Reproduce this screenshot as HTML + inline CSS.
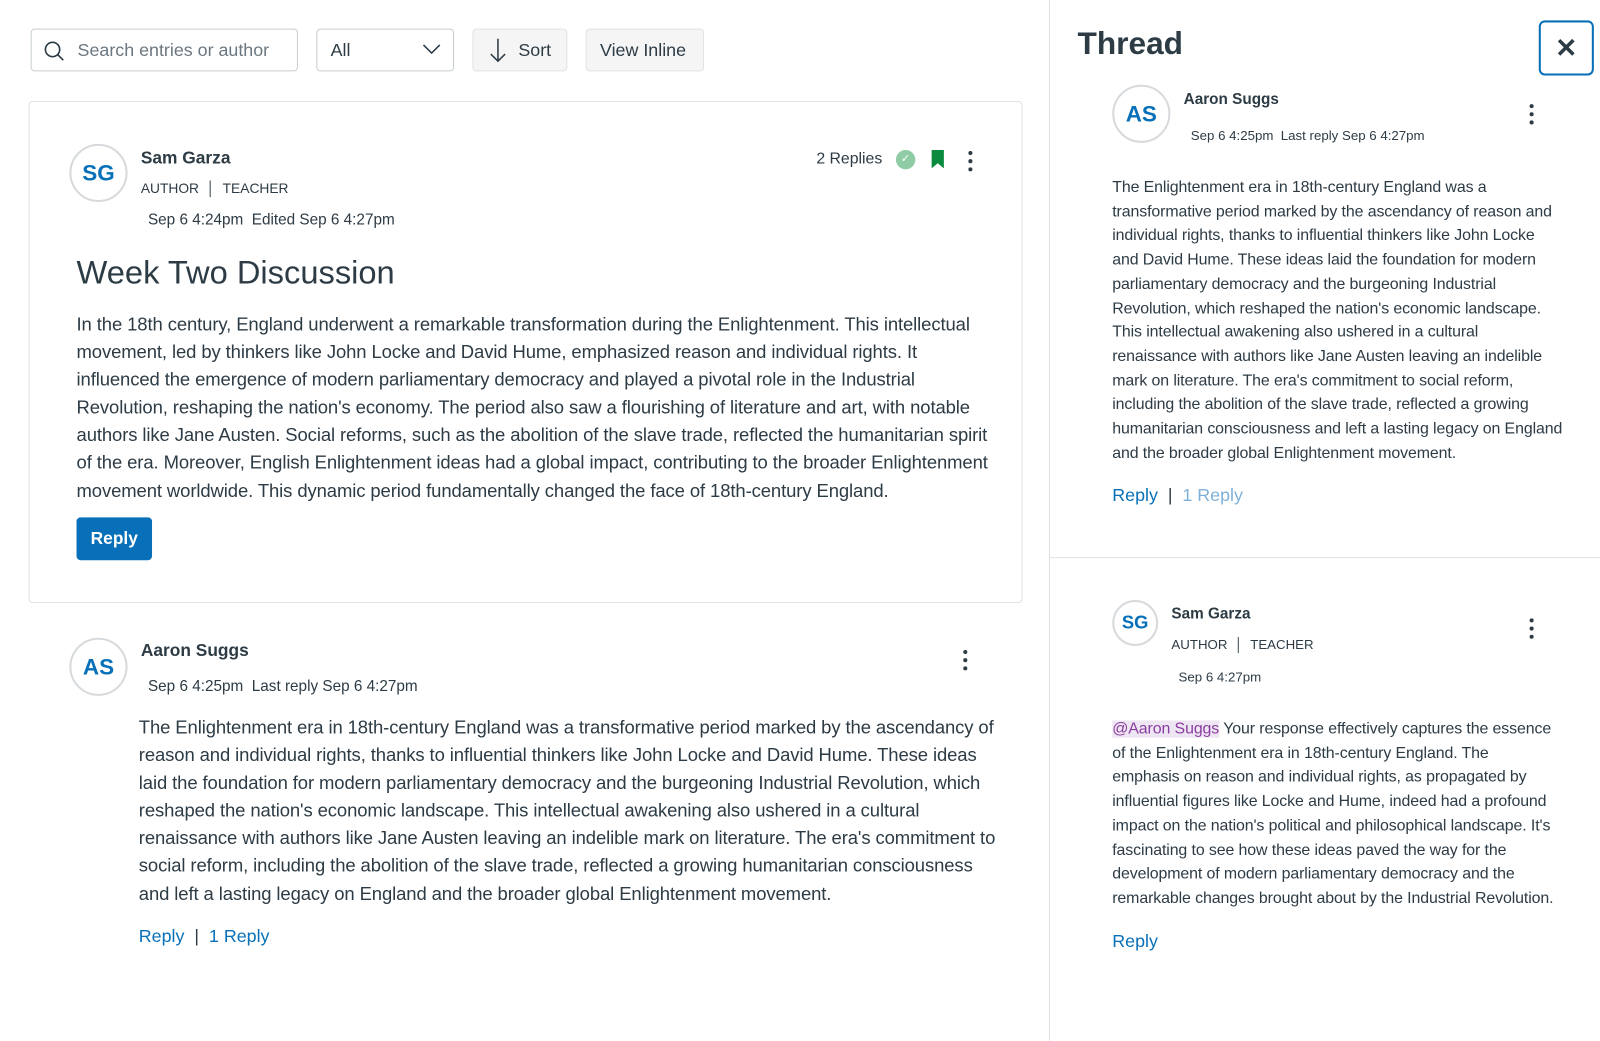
<!DOCTYPE html>
<html><head><meta charset="utf-8"><style>
*{box-sizing:border-box;margin:0;padding:0}
html,body{width:1600px;height:1020px;overflow:hidden;background:#fff}
#w{position:absolute;left:0;top:0;width:1568px;height:1000px;transform:scale(1.0204);transform-origin:0 0;font-family:"Liberation Sans",sans-serif;color:#2d3b45}
.a{position:absolute;white-space:nowrap}
.box{position:absolute;border:1px solid #c7cdd1;border-radius:4px;background:#fff}
.btn{position:absolute;background:#f5f5f5;border:1px solid #dfe2e4;border-radius:4px}
.av{position:absolute;border:2px solid #d7dadd;border-radius:50%;color:#0770b8;font-weight:bold;display:flex;align-items:center;justify-content:center}
.dots{position:absolute;width:4px}
.dots i{display:block;width:4px;height:4px;border-radius:50%;background:#2d3b45;margin-bottom:4px}
.body{position:absolute;white-space:nowrap;letter-spacing:-0.1px}
.link{color:#0770b8}
</style></head><body><div id="w">
<div class="box" style="left:30px;top:28px;width:262px;height:42px"></div>
<svg class="a" style="left:42px;top:39px" width="22" height="22" viewBox="0 0 22 22"><circle cx="9.5" cy="9.5" r="7" fill="none" stroke="#2d3b45" stroke-width="1.6"/><path d="M14.5 14.5L20 20" stroke="#2d3b45" stroke-width="1.6"/></svg>
<div class="a" style="left:76px;top:39px;font-size:17.5px;color:#6b7780">Search entries or author</div>
<div class="box" style="left:310px;top:28px;width:135px;height:42px"></div>
<div class="a" style="left:324px;top:39px;font-size:17.5px">All</div>
<svg class="a" style="left:414px;top:42px" width="18" height="12"><path d="M1 2l8 8 8-8" fill="none" stroke="#2d3b45" stroke-width="1.5"/></svg>
<div class="btn" style="left:463px;top:28px;width:93px;height:42px"></div>
<svg class="a" style="left:479px;top:37px" width="18" height="26"><path d="M9 1v22M2 16l7 7 7-7" fill="none" stroke="#2d3b45" stroke-width="1.5"/></svg>
<div class="a" style="left:508px;top:39px;font-size:17.5px">Sort</div>
<div class="btn" style="left:574px;top:28px;width:116px;height:42px"></div>
<div class="a" style="left:588px;top:39px;font-size:17.5px">View Inline</div>

<div class="box" style="left:28px;top:99px;width:974px;height:492px;border-color:#dfe2e4"></div>
<div class="av" style="left:68px;top:141px;width:57px;height:57px;font-size:22px">SG</div>
<div class="a" style="left:138px;top:145px;font-size:17px;font-weight:bold">Sam Garza</div>
<div class="a" style="left:138px;top:177px;font-size:13.5px">AUTHOR &nbsp;│&nbsp; TEACHER</div>
<div class="a" style="left:145px;top:207px;font-size:15px">Sep 6 4:24pm &nbsp;Edited Sep 6 4:27pm</div>
<div class="a" style="left:800px;top:147px;font-size:15.5px">2 Replies</div>
<div class="a" style="left:878px;top:147px;width:19px;height:19px;border-radius:50%;background:#8fcca6;color:#fff;font-size:11px;text-align:center;line-height:19px">✓</div>
<svg class="a" style="left:912px;top:146px" width="14" height="20"><path d="M1 1h12v18l-6-5-6 5z" fill="#0b8b3f"/></svg>
<div class="dots" style="left:949px;top:148px"><i></i><i></i><i></i></div>
<div class="a" style="left:75px;top:249px;font-size:32px">Week Two Discussion</div>
<div class="body" style="left:75px;top:305px;font-size:18.1px;line-height:27.1px">In the 18th century, England underwent a remarkable transformation during the Enlightenment. This intellectual<br>movement, led by thinkers like John Locke and David Hume, emphasized reason and individual rights. It<br>influenced the emergence of modern parliamentary democracy and played a pivotal role in the Industrial<br>Revolution, reshaping the nation's economy. The period also saw a flourishing of literature and art, with notable<br>authors like Jane Austen. Social reforms, such as the abolition of the slave trade, reflected the humanitarian spirit<br>of the era. Moreover, English Enlightenment ideas had a global impact, contributing to the broader Enlightenment<br>movement worldwide. This dynamic period fundamentally changed the face of 18th-century England.</div>
<div class="a" style="left:75px;top:507px;width:74px;height:42px;background:#0770b8;border-radius:4px;color:#fff;font-size:17px;font-weight:bold;text-align:center;line-height:42px">Reply</div>

<div class="av" style="left:68px;top:625px;width:57px;height:57px;font-size:22px">AS</div>
<div class="a" style="left:138px;top:628px;font-size:17px;font-weight:bold">Aaron Suggs</div>
<div class="a" style="left:145px;top:664px;font-size:15px">Sep 6 4:25pm &nbsp;Last reply Sep 6 4:27pm</div>
<div class="dots" style="left:944px;top:637px"><i></i><i></i><i></i></div>
<div class="body" style="left:136px;top:700px;font-size:18.1px;line-height:27.1px">The Enlightenment era in 18th-century England was a transformative period marked by the ascendancy of<br>reason and individual rights, thanks to influential thinkers like John Locke and David Hume. These ideas<br>laid the foundation for modern parliamentary democracy and the burgeoning Industrial Revolution, which<br>reshaped the nation's economic landscape. This intellectual awakening also ushered in a cultural<br>renaissance with authors like Jane Austen leaving an indelible mark on literature. The era's commitment to<br>social reform, including the abolition of the slave trade, reflected a growing humanitarian consciousness<br>and left a lasting legacy on England and the broader global Enlightenment movement.</div>
<div class="a" style="left:136px;top:907px;font-size:17.5px"><span class="link">Reply</span> &nbsp;|&nbsp; <span class="link">1 Reply</span></div>

<div class="a" style="left:1028px;top:0;width:1px;height:1020px;background:#dfe2e4"></div>
<div class="a" style="left:1056px;top:25px;font-size:31px;font-weight:bold">Thread</div>
<div class="a" style="left:1508px;top:20px;width:54px;height:54px;border:2px solid #0770b8;border-radius:6px;text-align:center;line-height:50px;font-size:26px;font-weight:bold">✕</div>
<div class="av" style="left:1090px;top:83px;width:57px;height:57px;font-size:22px">AS</div>
<div class="a" style="left:1160px;top:89px;font-size:15px;font-weight:bold">Aaron Suggs</div>
<div class="a" style="left:1167px;top:125px;font-size:13px">Sep 6 4:25pm &nbsp;Last reply Sep 6 4:27pm</div>
<div class="dots" style="left:1499px;top:102px"><i></i><i></i><i></i></div>
<div class="body" style="left:1090px;top:172px;font-size:15.6px;line-height:23.7px">The Enlightenment era in 18th-century England was a<br>transformative period marked by the ascendancy of reason and<br>individual rights, thanks to influential thinkers like John Locke<br>and David Hume. These ideas laid the foundation for modern<br>parliamentary democracy and the burgeoning Industrial<br>Revolution, which reshaped the nation's economic landscape.<br>This intellectual awakening also ushered in a cultural<br>renaissance with authors like Jane Austen leaving an indelible<br>mark on literature. The era's commitment to social reform,<br>including the abolition of the slave trade, reflected a growing<br>humanitarian consciousness and left a lasting legacy on England<br>and the broader global Enlightenment movement.</div>
<div class="a" style="left:1090px;top:475px;font-size:17.5px"><span class="link">Reply</span> &nbsp;|&nbsp; <span style="color:#7fb1d8">1 Reply</span></div>
<div class="a" style="left:1029px;top:546px;width:571px;height:1px;background:#dfe2e4"></div>
<div class="av" style="left:1090px;top:588px;width:45px;height:45px;font-size:18px">SG</div>
<div class="a" style="left:1148px;top:593px;font-size:15px;font-weight:bold">Sam Garza</div>
<div class="a" style="left:1148px;top:624px;font-size:13px">AUTHOR &nbsp;│&nbsp; TEACHER</div>
<div class="a" style="left:1155px;top:656px;font-size:13px">Sep 6 4:27pm</div>
<div class="dots" style="left:1499px;top:606px"><i></i><i></i><i></i></div>
<div class="body" style="left:1090px;top:703px;font-size:15.6px;line-height:23.7px"><span style="background:#efe6f3;color:#8a3da0">@Aaron Suggs</span> Your response effectively captures the essence<br>of the Enlightenment era in 18th-century England. The<br>emphasis on reason and individual rights, as propagated by<br>influential figures like Locke and Hume, indeed had a profound<br>impact on the nation's political and philosophical landscape. It's<br>fascinating to see how these ideas paved the way for the<br>development of modern parliamentary democracy and the<br>remarkable changes brought about by the Industrial Revolution.</div>
<div class="a link" style="left:1090px;top:912px;font-size:17.5px">Reply</div>
</div></body></html>
